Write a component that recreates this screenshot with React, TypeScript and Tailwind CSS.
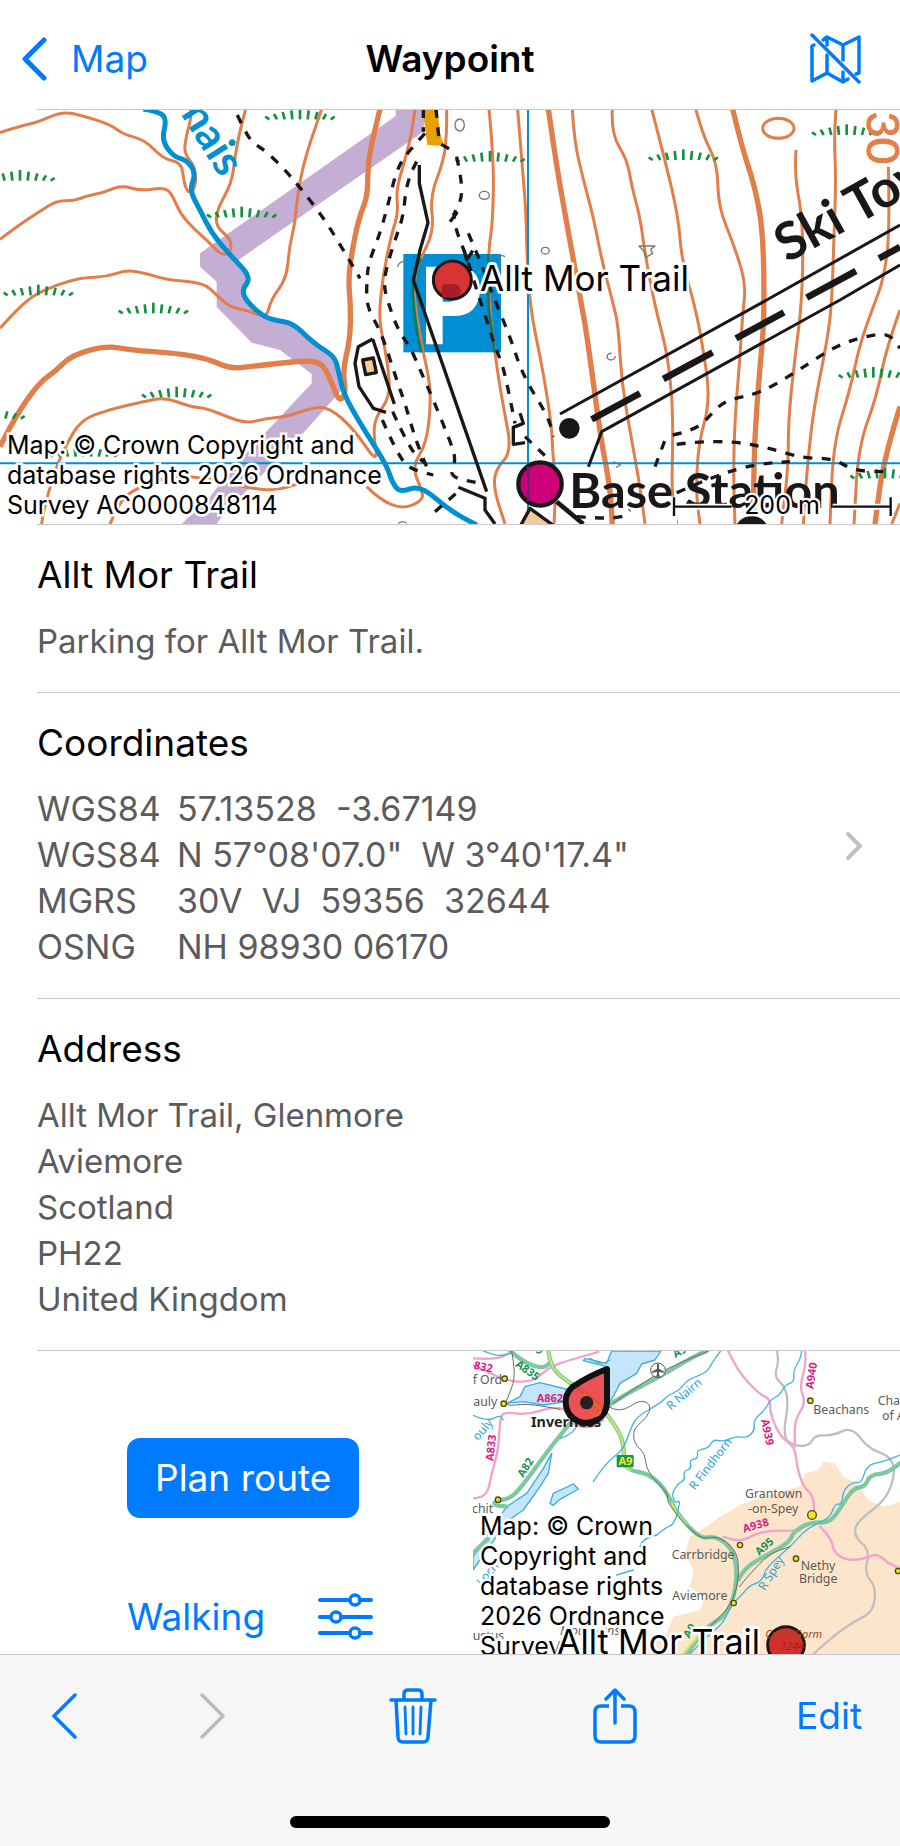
import type { ReactNode } from "react";

// ─── Geometry helpers ─────────────────────────────────────────────────────────

/** Turns "x,y x,y ..." into a softly rounded path through the segment midpoints. */
function curve(points: string) {
  const p = points.trim().split(/\s+/).map((s) => s.split(",").map(Number));
  let d = `M${p[0][0]},${p[0][1]}`;
  for (let i = 1; i < p.length - 1; i++) {
    const mx = (p[i][0] + p[i + 1][0]) / 2;
    const my = (p[i][1] + p[i + 1][1]) / 2;
    d += ` Q${p[i][0]},${p[i][1]} ${mx},${my}`;
  }
  const last = p[p.length - 1];
  return `${d} L${last[0]},${last[1]}`;
}

function Curves({ lines }: { lines: string[] }) {
  return (
    <>
      {lines.map((l) => (
        <path key={l} d={curve(l)} />
      ))}
    </>
  );
}

// ─── Trail map data ───────────────────────────────────────────────────────────

const CONTOURS = [
  "0,398 60,378 110,368 185,335 240,345 330,373 370,403 435,420 490,477 545,488 552,550 566,582 588,560 585,500 552,460 558,410 572,360 572,327",
  "0,718 50,680 110,640 170,602 220,603 260,588 310,578 365,555 420,573 490,562 515,580 540,640 580,685 620,720 668,770 695,750 690,715 648,680 650,630 695,550 705,470 718,400 737,327",
  "0,985 40,940 100,885 160,860 200,845 250,833 320,830 380,810 440,820 500,840 610,848 650,885 690,922 740,930 800,955 812,900 860,835 868,740 885,670 895,560 920,460 940,400 965,327",
  "125,1572 128,1540 165,1410 200,1330 245,1258 330,1228 430,1205 495,1192 570,1220 620,1225 680,1250 740,1270 800,1255 860,1250 930,1225 985,1220 1060,1285 1135,1395 1120,1300 1128,1250 1170,1190 1165,1100 1145,1000 1137,940 1150,820 1175,700 1195,640 1188,570 1215,480 1235,400 1245,327",
  "330,1572 360,1500 410,1465 500,1430 600,1430 750,1465 830,1472 905,1448",
  "1100,1460 1140,1500 1210,1528 1270,1500 1265,1470 1236,1400 1280,1330 1293,1200 1285,1120 1265,1040 1240,880 1245,820 1265,770 1302,690 1290,590 1332,480 1340,400 1340,327",
  "1467,328 1482,480 1478,670 1465,750 1467,920 1490,1100 1510,1220 1536,1355 1485,1410 1482,1470 1515,1572",
  "1553,328 1565,480 1578,630 1580,750 1590,920 1620,1070 1635,1150 1655,1280 1658,1360 1668,1450 1662,1572",
  "1717,327 1722,420 1750,540 1780,650 1805,780 1842,920 1855,980 1865,1150 1895,1320 1920,1460 1935,1572",
  "1837,327 1833,400 1882,480 1895,560 1920,650 1935,760 1965,920 2000,1050 2018,1200 2018,1350 2015,1480 2030,1572",
  "1955,327 1995,480 2035,650 2045,780 2085,920 2105,1020 2132,1200 2095,1330 2088,1480 2100,1572",
  "2087,327 2110,410 2152,490 2155,620 2200,730 2238,850 2228,940 2218,1100 2205,1250 2200,1420 2205,1572",
  "2388,450 2383,520 2405,640 2410,780 2402,940 2390,1030 2365,1250 2365,1400 2345,1572",
  "2508,327 2502,400 2508,540 2502,700 2495,920 2480,1030 2440,1230 2420,1420 2410,1572",
  "2665,500 2670,700 2650,840 2620,920 2580,1030 2550,1170 2500,1330 2490,1572",
  "2700,930 2660,1040 2630,1190 2575,1340 2562,1572",
  "2675,1572 2700,1510",
];

const INDEX_CONTOURS = [
  "0,1340 45,1250 120,1145 165,1115 215,1065 320,1037 390,1050 530,1060 620,1075 690,1106 750,1100 860,1087 930,1082 970,1092 1000,1160 1018,1205 1038,1180 1028,1110 1050,1020 1052,920 1045,840 1055,760 1075,660 1102,590 1103,530 1108,460 1140,327",
  "1645,327 1670,500 1695,640 1720,780 1742,900 1760,1000 1780,1150 1805,1330 1830,1460 1837,1572",
  "2198,327 2225,440 2265,560 2290,700 2293,960 2280,1100 2262,1330 2260,1572",
  "2700,1220 2650,1380 2625,1572",
];

const FOOTPATHS = [
  "712,345 735,395 760,430 800,455 860,515 910,575 975,660 1030,750 1080,835",
  "1275,400 1220,460 1190,510 1165,610 1140,700 1105,790 1100,850 1100,920 1145,1000 1190,1140 1215,1210 1235,1280 1255,1340 1280,1400",
  "1250,485 1220,540 1210,650 1185,720 1160,800 1150,860 1175,940 1200,1000 1230,1040 1265,1120 1300,1200 1345,1310 1370,1380 1345,1430 1440,1450",
  "1147,1260 1200,1380 1240,1410 1300,1425",
  "1178,1235 1230,1350 1275,1390",
  "1370,470 1385,540 1385,600 1357,645 1375,710 1400,770 1430,870 1460,960 1485,1040 1510,1100 1535,1220 1545,1270",
  "1405,700 1440,780 1480,890 1530,1010 1570,1130 1645,1250 1660,1310",
  "1575,1310 1640,1372",
  "1965,1400 1995,1320",
  "2018,1305 2090,1290 2140,1235 2180,1200 2280,1180 2390,1115 2510,1035 2620,1003 2670,1003 2700,1045",
  "2030,1333 2090,1325 2210,1325 2310,1345 2410,1375 2500,1375 2560,1412 2650,1415",
  "2030,1478 2150,1425 2270,1392 2370,1385",
  "1305,1535 1380,1470",
  "1730,1550 1860,1560 1890,1530",
];

const TUFTS = [
  [900, 358], [60, 542], [725, 652], [115, 886], [460, 940], [530, 1192], [250, 1370], [-30, 1256],
  [1470, 485], [2050, 480], [2540, 405], [2620, 1133], [2655, 1435],
];

const TUFT_HEIGHTS = [8, 16, 22, 27, 32, 27, 22, 16, 8];

function Tuft({ x, y }: { x: number; y: number }) {
  return (
    <g>
      {TUFT_HEIGHTS.map((h, n) => {
        const i = n - 4;
        return <line key={i} x1={x + i * 23} y1={y} x2={x + i * 23 + i * 3} y2={y - h} />;
      })}
    </g>
  );
}

function TrailMap() {
  return (
    <svg viewBox="0 327 2700 1245" className="block w-full" role="img" aria-label="Map of Allt Mor Trail">
      {/* Access land band */}
      <path
        fill="#c5aed3"
        d="M600,760 L1187,348 V327 H1275 L1270,395 L712,782 L745,840 L730,880 L790,945 L890,972 L1000,1070 L1025,1170 L900,1310 L780,1430 L665,1550 L650,1572 H545 L630,1490 L700,1400 L790,1305 L935,1150 V1122 L840,1050 L755,1028 L650,920 V845 L600,800Z"
      />
      <path fill="#e8a000" d="M1268,327 H1312 L1320,400 L1333,438 L1282,435Z" />

      {/* Parking sign */}
      <rect x="1210" y="762" width="293" height="295" fill="#008fd3" />
      <path fill="#fff" fillRule="evenodd" d="M1278,800 H1380 Q1440,805 1440,872 Q1435,948 1360,948 H1328 V1033 H1278Z M1328,845 V905 H1350 Q1385,900 1385,872 Q1385,850 1350,845Z" />

      <g fill="none" strokeLinecap="butt" strokeLinejoin="round">
        <g stroke="#e17e49" strokeWidth="9">
          <Curves lines={CONTOURS} />
          <ellipse cx="2335" cy="385" rx="47" ry="30" />
        </g>
        <g stroke="#e17e49" strokeWidth="16">
          <Curves lines={INDEX_CONTOURS} />
        </g>
        <path stroke="#0d7a62" strokeWidth="9" d="M1262,775 Q1240,820 1238,880 Q1245,980 1264,1057 M1465,762 V920 L1484,1057" />
        <g stroke="#0090cf">
          <path strokeWidth="6" d="M1584,327 V1572 M0,1390 H2700" />
          <path
            strokeWidth="15"
            d={curve("430,327 480,335 500,360 485,420 520,470 560,480 588,520 568,570 600,630 635,700 690,765 755,832 725,870 740,905 790,950 830,962 880,970 940,1030 1003,1068 1015,1110 1030,1180 1080,1270 1160,1395 1175,1445 1200,1478 1260,1455 1350,1532 1430,1575")}
          />
        </g>
        <g stroke="#16903f" strokeWidth="8">
          {TUFTS.map(([x, y]) => (
            <Tuft key={`${x}-${y}`} x={x} y={y} />
          ))}
        </g>

        {/* Paths and tracks */}
        <g stroke="#1a1718" strokeWidth="10" strokeDasharray="27 28">
          <Curves lines={FOOTPATHS} />
          <path d="M1270,327 V395 M1308,327 L1318,430 L1350,448" />
        </g>
        <g stroke="#1a1718" strokeWidth="10">
          <path d="M1258,495 V550 L1284,668 L1260,750 L1240,840 L1460,1475" />
          <path d="M1118,1017 L1075,1040 L1065,1090 L1077,1160 L1120,1225 L1158,1237 M1118,1017 L1183,1212" />
          <path d="M1560,1240 L1570,1270 L1540,1282 V1333 L1575,1328 M1375,1462 L1455,1495 V1530 L1485,1572" />
          <path d="M1357,645 L1370,640 L1350,665 M1392,750 L1400,780 L1418,752" />
          <path fill="#f8c998" d="M1088,1080 L1120,1074 L1129,1118 L1097,1124Z" />
          <path fill="#f8c998" d="M1590,1525 L1560,1580 H1665Z" />
          <path strokeWidth="14" d="M1670,1505 L1750,1572" />
        </g>

        {/* Ski tow */}
        <g stroke="#1a1718">
          <path strokeWidth="9" d="M1680,1242 L2300,900 L2700,675 M1765,1400 L1805,1295 L2520,900 L2700,795" />
          <path strokeWidth="20" d="M1775,1258 L1920,1180 M1990,1137 L2138,1057 M2208,1015 L2352,937 M2420,893 L2568,813 M2637,775 L2700,741" />
        </g>
        <g stroke="#777" strokeWidth="4">
          <ellipse cx="1379" cy="375" rx="14" ry="18" />
          <ellipse cx="1453" cy="586" rx="15" ry="12" />
          <ellipse cx="1636" cy="752" rx="12" ry="10" />
          <path d="M1917,738 H1965 L1952,748 L1958,760 L1938,772 L1930,752Z M1835,1060 A12 10 0 1 0 1845,1068 M1840,1385 L1862,1395 L1848,1402 M1192,800 Q1200,780 1222,785 M1490,775 Q1505,762 1515,770 M1195,1570 Q1208,1560 1220,1570" />
        </g>
      </g>
      <circle cx="1708" cy="1285" r="31" fill="#1a1718" />
      <circle cx="2255" cy="1600" r="52" fill="#1a1718" />

      {/* Printed names */}
      <g className="font-[Lato,sans-serif] font-bold">
        <text transform="translate(662 536) rotate(58)" fontSize="130" textAnchor="end" fill="#0090cf">nais</text>
        <text transform="translate(2362 790) rotate(-29)" fontSize="156" fill="#1a1718">Ski Tow</text>
        <text x="1708" y="1525" fontSize="146" fill="#1a1718">Base Station</text>
        <text transform="translate(2600 492) rotate(90)" fontSize="136" textAnchor="end" fill="#e17e49" stroke="#e17e49" strokeWidth="3" className="font-normal">30</text>
      </g>
      <circle cx="1620" cy="1452" r="65" fill="#cc0079" stroke="#1a1718" strokeWidth="13" />
      <path stroke="#62206e" strokeWidth="6" d="M1584,1398 V1505" />

      {/* Waypoint marker */}
      <circle cx="1357" cy="840" r="57" fill="#d93434" stroke="#1a1718" strokeWidth="9" />
      <path fill="#a91c2c" d="M1326,890 V862 Q1326,852 1340,852 H1365 Q1380,855 1382,872 Q1382,885 1375,888 Q1350,898 1326,890Z" />
      <text x="1440" y="873" fontSize="105" stroke="#fff" strokeWidth="16" strokeLinejoin="round" paintOrder="stroke">Allt Mor Trail</text>

      {/* Scale bar */}
      <g fill="none">
        <path stroke="#fff" strokeWidth="18" d="M2022,1590 V1490 M2022,1520 H2195 M2498,1520 H2672 M2672,1490 V1550" />
        <path stroke="#111" strokeWidth="7" d="M2022,1492 V1548 M2022,1520 H2195 M2498,1520 H2672 M2672,1492 V1548" />
      </g>
      <text x="2346" y="1542" fontSize="75" textAnchor="middle" stroke="#fff" strokeWidth="14" strokeLinejoin="round" paintOrder="stroke">200 m</text>
    </svg>
  );
}

// ─── Overview map ─────────────────────────────────────────────────────────────

const TRUNK_ROADS = [
  "265,33 270,70 300,110 380,160 440,220 480,280 492,320 492,370 510,392 560,400 600,430 625,465 650,520 720,597 765,588 812,620 832,680 825,760 800,825 740,860 680,942",
  "330,250 280,310 200,420 155,475 105,483 102,495 140,500",
  "440,200 500,160 600,110 700,50 740,33",
  "835,720 850,685 930,640 990,605 1000,575 1055,545 1110,550 1150,490 1180,445 1215,440 1230,405 1280,400 1320,370",
  "150,33 195,70 250,85 268,70",
  "39,640 90,590",
];

const PRIMARY_ROADS = [
  "39,475 80,475 95,400 115,330 120,240 130,215 200,225 280,200 320,210",
  "39,75 90,100 150,125 220,125 270,80 330,60 415,36",
  "805,33 830,90 900,165 930,175 930,220 960,290 1005,320 1010,380 1030,440 1062,470 1062,530",
  "1035,33 1040,70 1018,140 1038,190 1003,240 1005,320",
  "790,590 840,610 900,572 1020,572",
  "1080,560 1115,595 1120,635 1160,662 1220,655 1250,640 1285,670 1320,685",
  "340,250 380,270 430,240",
  "39,55 110,60 160,33",
];

const RIVERS = [
  "400,425 435,370 490,330 510,270 530,230 600,190 625,165 660,150 680,120 740,98 755,70 782,33",
  "590,585 620,560 640,555 655,510 660,480 645,490 635,460 655,430 675,420 670,395 695,385 688,360 715,355 710,330 745,325 760,298 790,305 830,288 860,295 885,270 880,240 915,210 930,180 960,165 975,135 1003,125 1000,90 1020,60 1025,33",
  "690,942 740,890 790,850 810,800 850,760 870,735 905,725 920,680 990,622 1040,565 1110,535 1125,490 1145,495 1150,450 1180,425 1205,430 1220,375 1270,365 1320,345",
  "540,620 545,600 590,585",
  "470,705 520,690",
  "39,225 80,245 120,225 130,240",
  "70,33 110,50 150,40",
  "390,55 420,75 450,60",
  "300,295 330,285 350,260",
];

const RAILWAYS = [
  "155,33 168,100 150,160 130,200 200,190 300,208",
  "445,200 480,220 540,178 575,195 560,235 520,265 522,310 555,340 560,395 625,460 620,490 720,602 770,585 830,630 838,700 820,790 740,870",
  "838,740 870,700 930,640 990,620",
  "460,190 530,140 620,85 745,33",
];

const TOWNS = [
  { x: 134, y: 116 }, { x: 131, y: 191 }, { x: 114, y: 479 }, { x: 1051, y: 182 },
  { x: 840, y: 615 }, { x: 1008, y: 656 }, { x: 821, y: 789 }, { x: 1314, y: 693 },
];

const PLACE_NAMES = [
  { x: 38, y: 133, text: "f Ord" }, { x: 40, y: 197, text: "auly" }, { x: 36, y: 518, text: "chit" },
  { x: 1060, y: 222, text: "Beachans" }, { x: 1253, y: 195, text: "Cha" }, { x: 1266, y: 239, text: "of A" },
  { x: 855, y: 475, text: "Grantown" }, { x: 864, y: 520, text: "-on-Spey" }, { x: 635, y: 657, text: "Carrbridge" },
  { x: 637, y: 780, text: "Aviemore" }, { x: 1022, y: 691, text: "Nethy" }, { x: 1017, y: 729, text: "Bridge" },
  { x: 38, y: 900, text: "ustus" },
];

const ROAD_NUMBERS = [
  { at: "translate(40 86) rotate(12)", text: "832", fill: "#d81e85" },
  { at: "translate(230 187)", text: "A862", fill: "#d81e85" },
  { at: "translate(100 364) rotate(-84)", text: "A833", fill: "#d81e85" },
  { at: "translate(1060 148) rotate(-82)", text: "A940", fill: "#d81e85" },
  { at: "translate(903 240) rotate(78)", text: "A939", fill: "#d81e85" },
  { at: "translate(852 578) rotate(-16)", text: "A938", fill: "#d81e85" },
  { at: "translate(164 77) rotate(36)", text: "A835", fill: "#159455" },
  { at: "translate(190 414) rotate(-58)", text: "A82", fill: "#159455" },
  { at: "translate(646 54) rotate(-28)", text: "A9", fill: "#159455" },
  { at: "translate(898 648) rotate(-42)", text: "A95", fill: "#159455" },
  { at: "translate(688 896) rotate(-60)", text: "A9", fill: "#159455" },
  { at: "translate(225 36) rotate(28)", text: "9", fill: "#159455" },
];

const RIVER_NAMES = [
  { at: "translate(632 212) rotate(-40)", text: "R Nairn" },
  { at: "translate(704 452) rotate(-52)", text: "R Findhorn" },
  { at: "translate(914 754) rotate(-58)", text: "R Spey" },
  { at: "translate(54 304) rotate(-50)", text: "ouly" },
  { at: "translate(66 740) rotate(-50)", text: "Loch" },
];

function OverviewMap() {
  return (
    <svg
      viewBox="39 33 1281 909"
      preserveAspectRatio="xMinYMin slice"
      className="block size-full"
      role="img"
      aria-label="Overview map from Inverness to Cairn Gorm"
    >
      <path
        fill="#fde5cb"
        d="M1035,400 L1075,390 L1090,365 L1125,370 L1150,410 L1190,430 L1225,480 L1270,500 L1320,485 V942 H560 V900 L620,880 L640,830 L720,810 L735,770 L690,740 L700,690 L675,640 L690,590 L740,560 L780,530 L850,490 L960,455 L1020,440Z"
      />
      <g fill="#c5e6fa" stroke="#3aaede" strokeWidth="4" strokeLinejoin="round">
        <path d="M455,33 H603 L585,60 L545,72 L530,100 L480,130 L470,150 L448,190 L440,80 L370,62 L375,55 L440,70Z" />
        <path d="M140,190 L180,170 L195,140 L240,128 L330,150 L320,185 L250,195 L190,185Z" />
        <path d="M275,340 L265,400 L240,440 L190,510 L140,545 L39,690 V650 L140,500 L200,460 L250,385Z" />
        <path d="M270,490 L280,460 L340,432 L355,447 L300,478 L280,496Z" />
      </g>

      <g fill="none" strokeLinejoin="round" strokeLinecap="round">
        <path
          stroke="#bfbfbf"
          strokeWidth="7"
          d={curve("950,33 958,60 942,110 975,140 985,190 968,295 1010,320 1050,315 1065,285 1120,287 1175,260 1225,325 1282,345 1305,380 1295,440 1265,490 1190,545 1182,590 1230,630 1213,700 1248,740 1240,815 1190,840 1130,880 1060,942")}
        />
        <g stroke="#f0a3cb" strokeWidth="7"><Curves lines={PRIMARY_ROADS} /></g>
        <g stroke="#7cc8a0" strokeWidth="13"><Curves lines={TRUNK_ROADS} /></g>
        <g stroke="#cbe963" strokeWidth="6">
          <path d={curve("265,33 270,70 300,110 380,160 440,220 480,280 492,320 492,370 510,392")} />
          <path d={curve("635,490 650,520 680,555")} />
          <path d={curve("720,885 700,905 670,942")} />
        </g>
        <g stroke="#43b4e2" strokeWidth="4"><Curves lines={RIVERS} /></g>
        <g stroke="#6b6b6b" strokeWidth="3"><Curves lines={RAILWAYS} /></g>
      </g>

      <g fill="#f5e51b" stroke="#4a4a20" strokeWidth="4">
        {TOWNS.map((t) => (
          <circle key={`${t.x}-${t.y}`} cx={t.x} cy={t.y} r="8" />
        ))}
        <circle cx="1056" cy="525" r="13" />
      </g>

      {/* Airport */}
      <circle cx="594" cy="91" r="22" fill="#fff" stroke="#555" strokeWidth="3" />
      <path fill="#555" d="M591,74 Q594,68 597,74 V86 L612,95 V99 L597,95 V105 L603,110 H585 L591,105 V95 L576,99 V95 L591,86Z" />

      <g className="font-['Noto_Sans',sans-serif]">
        <g fontSize="37" fill="#5a5a5a">
          {PLACE_NAMES.map((p) => (
            <text key={p.text} x={p.x} y={p.y}>{p.text}</text>
          ))}
        </g>
        <g fontSize="33" fontWeight="700">
          {ROAD_NUMBERS.map((r) => (
            <text key={r.at} transform={r.at} fill={r.fill}>{r.text}</text>
          ))}
        </g>
        <g fontSize="36" fill="#2ea3d3">
          {RIVER_NAMES.map((r) => (
            <text key={r.at} transform={r.at}>{r.text}</text>
          ))}
        </g>
        <rect x="470" y="345" width="51" height="37" rx="4" fill="#159455" />
        <text x="496" y="376" fontSize="33" fontWeight="700" textAnchor="middle" fill="#f7ea1d">A9</text>
        <text x="213" y="260" fontSize="43" fontWeight="700" fill="#222">Inverness</text>
        <g fontStyle="italic">
          <text x="300" y="884" fontSize="38" fill="#666">Mountains</text>
        </g>
      </g>

      {/* Start marker */}
      <path fill="#e8323c" fillOpacity="0.85" stroke="#111" strokeWidth="18" strokeLinejoin="round" d="M441,87 V188 A62 62 0 1 1 336,142 Q385,108 441,87Z" />
      <path fill="none" stroke="#f0641e" strokeWidth="8" d="M372,160 L405,190 M390,212 A16 16 0 1 0 400,196" />
      <circle cx="380" cy="188" r="20" fill="#222" />

      {/* Destination marker */}
      <circle cx="978" cy="915" r="55" fill="#d32f2c" stroke="#1a1718" strokeWidth="9" />
      <g fontStyle="italic" className="font-['Noto_Sans',sans-serif]">
        <text x="916" y="894" fontSize="33" fill="#9c4a14">Cairn Gorm</text>
        <text x="962" y="930" fontSize="32" fill="#a3211c">1244</text>
      </g>
    </svg>
  );
}

// ─── Shared pieces ────────────────────────────────────────────────────────────

const halo = "[-webkit-text-stroke:5px_white] [paint-order:stroke_fill]";

function Attribution({ className }: { className: string }) {
  return (
    <p className={`absolute left-[7px] text-[25px] leading-[30px] text-black ${halo} ${className}`}>
      Map: © Crown Copyright and database rights 2026 Ordnance Survey AC0000848114
    </p>
  );
}

function Section({ title, children }: { title: string; children: ReactNode }) {
  return (
    <section className="ml-[37px] flex flex-col gap-[20px] border-b border-[#c8c8ca] pt-[27px] pb-[28px]">
      <h2 className="text-[37px] leading-[46px] text-black">{title}</h2>
      {children}
    </section>
  );
}

const COORDINATES = [
  ["WGS84", "57.13528  -3.67149"],
  ["WGS84", "N 57°08'07.0\"  W 3°40'17.4\""],
  ["MGRS", "30V  VJ  59356  32644"],
  ["OSNG", "NH 98930 06170"],
];

const ADDRESS = ["Allt Mor Trail, Glenmore", "Aviemore", "Scotland", "PH22", "United Kingdom"];

// ─── Icons ────────────────────────────────────────────────────────────────────

function MapSlashIcon() {
  return (
    <svg width="52" height="52" viewBox="0 0 52 52" fill="none" stroke="currentColor" strokeWidth="3.500" strokeLinecap="round" strokeLinejoin="round">
      <path d="M4,12 L2,13 V48 L17,40 V22 M13,7 L17,4 L33,12 L49,4 V40 L46,41 M17,4 V12 M17,40 L33,49 L38,46 M33,12 V27 M33,39 V48" />
      <path d="M2,2 L49,49" />
    </svg>
  );
}

function TrashIcon() {
  return (
    <svg width="48" height="56" viewBox="0 0 48 56" fill="none" stroke="currentColor" strokeWidth="3.500" strokeLinecap="round" strokeLinejoin="round">
      <path d="M2,12 H46 M15,12 V6 Q15,2 19,2 H29 Q33,2 33,6 V12 M7,12 L9,49 Q9.300,54 14,54 H34 Q38.700,54 39,49 L42,12" />
      <path strokeWidth="2.800" d="M16,19 L17,46 M24,19 V46 M32,19 L31,46" />
    </svg>
  );
}

function ShareIcon() {
  return (
    <svg width="44" height="56" viewBox="0 0 44 56" fill="none" stroke="currentColor" strokeWidth="3.500" strokeLinecap="round" strokeLinejoin="round">
      <path strokeLinecap="butt" d="M16,18 H8 Q2,18 2,24 V48 Q2,54 8,54 H36 Q42,54 42,48 V24 Q42,18 36,18 H28" />
      <path d="M22,35 V2 M13,11 L22,2 L31,11" />
    </svg>
  );
}

function SlidersIcon() {
  return (
    <svg width="56" height="48" viewBox="0 0 56 48" fill="none" stroke="currentColor" strokeLinecap="round">
      <path strokeWidth="4" d="M3,7 H32 M43,7 H54 M3,24 H13 M24,24 H54 M3,40 H32 M43,40 H54" />
      <g strokeWidth="3.500">
        <circle cx="38" cy="7" r="5" />
        <circle cx="19" cy="24" r="5" />
        <circle cx="38" cy="40" r="5" />
      </g>
    </svg>
  );
}

// ─── Screen ───────────────────────────────────────────────────────────────────

export default function App() {
  return (
    <div className="flex min-h-screen flex-col bg-white font-[Inter,'Liberation_Sans',sans-serif]">
      <header className="grid h-[109px] grid-cols-[1fr_auto_1fr] items-center px-[22px] pt-[8px]">
        <a href="#map" className="flex items-center gap-[23px] text-[37px] leading-[46px] text-[#007aff]">
          <svg width="26" height="44" viewBox="0 0 26 44" fill="none" stroke="currentColor" strokeWidth="5" strokeLinecap="round" strokeLinejoin="round">
            <path d="M22,3 L3,22 L22,41" />
          </svg>
          Map
        </a>
        <h1 className="text-[37px] leading-[46px] font-semibold text-black">Waypoint</h1>
        <button type="button" aria-label="Hide map" className="mr-4 justify-self-end text-[#007aff]">
          <MapSlashIcon />
        </button>
      </header>

      <div className="relative overflow-hidden">
        <TrailMap />
        <div className="absolute top-0 right-0 left-[37px] h-px bg-[#c8c8ca]" />
        <Attribution className="bottom-1 w-[400px]" />
      </div>
      <div className="ml-[37px] h-px bg-[#c8c8ca]" />

      <Section title="Allt Mor Trail">
        <p className="text-[33px] leading-[46px] text-[#5b5b5d]">Parking for Allt Mor Trail.</p>
      </Section>

      <div className="relative">
        <Section title="Coordinates">
          <table className="text-[34px] leading-[46px] text-[#5b5b5d]">
            <tbody>
              {COORDINATES.map(([system, value]) => (
                <tr key={value}>
                  <th scope="row" className="w-[140px] p-0 text-left font-normal">{system}</th>
                  <td className="p-0 whitespace-pre">{value}</td>
                </tr>
              ))}
            </tbody>
          </table>
        </Section>
        <button type="button" aria-label="Show coordinates" className="absolute inset-y-0 right-[37px] text-[#c0c0c3]">
          <svg width="18" height="30" viewBox="0 0 18 30" fill="none" stroke="currentColor" strokeWidth="4" strokeLinecap="round" strokeLinejoin="round">
            <path d="M3,3 L15,15 L3,27" />
          </svg>
        </button>
      </div>

      <Section title="Address">
        <address className="text-[33px] leading-[46px] text-[#5b5b5d] not-italic">
          {ADDRESS.map((line) => (
            <div key={line}>{line}</div>
          ))}
        </address>
      </Section>

      <div className="grid h-[303px] grid-cols-[473fr_427fr]">
        <div className="flex flex-col items-start gap-[75px] pt-[87px] pl-[127px]">
          <button type="button" className="h-[80px] rounded-[13px] bg-[#007aff] px-[28px] text-[37px] leading-[46px] text-white">
            Plan route
          </button>
          <div className="flex items-center gap-[52px] text-[#007aff]">
            <button type="button" className="text-[37px] leading-[46px]">Walking</button>
            <button type="button" aria-label="Route options">
              <SlidersIcon />
            </button>
          </div>
        </div>
        <div className="relative overflow-hidden">
          <OverviewMap />
          <Attribution className="top-[160px] w-[200px]" />
          <p className={`absolute top-[268px] left-[84px] text-[34px] leading-[46px] whitespace-nowrap text-black ${halo}`}>Allt Mor Trail</p>
        </div>
      </div>

      <footer className="flex flex-1 flex-col border-t border-[#c4c4c6] bg-[#f6f6f6]">
        <nav className="flex h-[122px] items-center pr-[38px] pl-[50px] text-[#007aff]">
          <button type="button" aria-label="Previous">
            <svg width="28" height="46" viewBox="0 0 28 46" fill="none" stroke="currentColor" strokeWidth="3.500" strokeLinecap="round" strokeLinejoin="round">
              <path d="M25,2 L4,23 L25,44" />
            </svg>
          </button>
          <button type="button" aria-label="Next" className="ml-[120px] text-[#bcbcbe]">
            <svg width="28" height="46" viewBox="0 0 28 46" fill="none" stroke="currentColor" strokeWidth="3.500" strokeLinecap="round" strokeLinejoin="round">
              <path d="M4,2 L25,23 L4,44" />
            </svg>
          </button>
          <button type="button" aria-label="Delete" className="ml-[163px]">
            <TrashIcon />
          </button>
          <button type="button" aria-label="Share" className="ml-[156px]">
            <ShareIcon />
          </button>
          <button type="button" className="ml-auto text-[37px] leading-[46px]">Edit</button>
        </nav>
        <div className="mx-auto mt-auto mb-[18px] h-[12px] w-[320px] rounded-full bg-black" />
      </footer>
    </div>
  );
}
